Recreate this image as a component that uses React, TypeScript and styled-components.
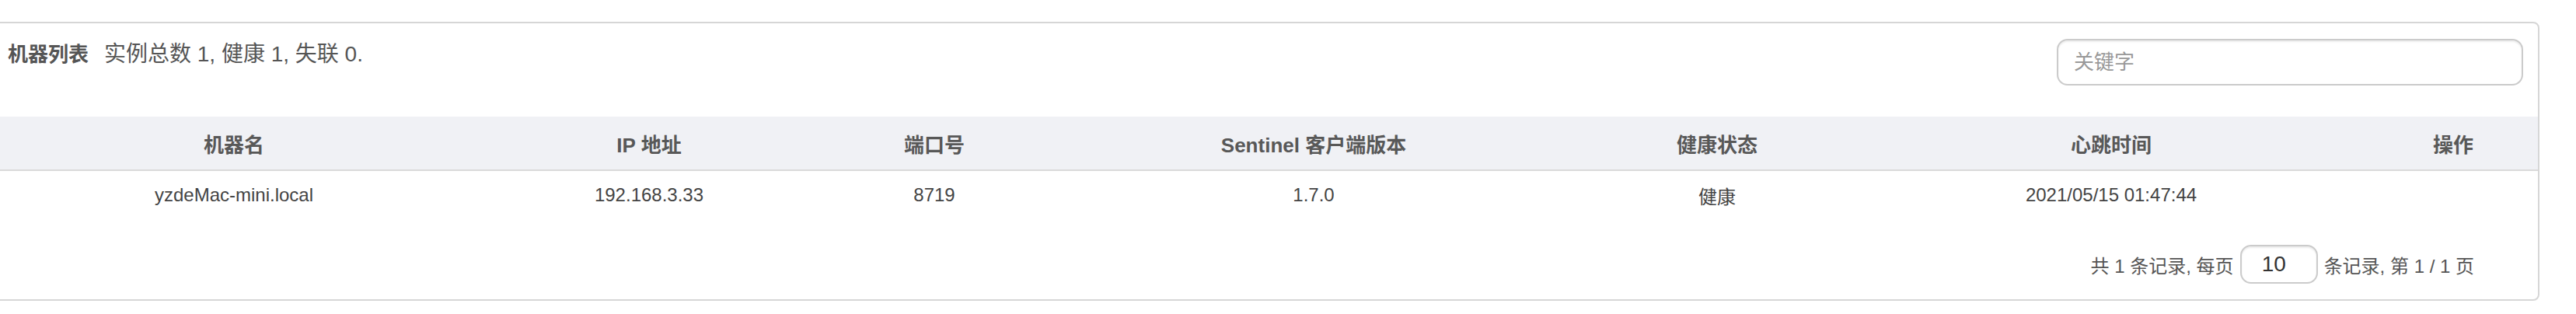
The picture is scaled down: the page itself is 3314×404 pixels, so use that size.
import React from 'react';
import styled, { createGlobalStyle } from 'styled-components';

const GlobalStyle = createGlobalStyle`
  html, body { margin: 0; padding: 0; background: #ffffff; }
  body {
    font-family: "Liberation Sans", "Noto Sans CJK SC", sans-serif;
    color: #444;
    overflow: hidden;
  }
  * { box-sizing: border-box; }
`;

const Page = styled.div`
  padding: 28px 47px 0 0;
`;

const Card = styled.section`
  margin-left: -13px;
  border: 2px solid #d6d6d6;
  border-radius: 8px;
  background: #fff;
`;

const CardHeader = styled.div`
  display: flex;
  justify-content: space-between;
  align-items: flex-start;
  padding: 20px 19px 40px 21px;
`;

const TitleLine = styled.div`
  display: flex;
  align-items: baseline;
  margin-top: 2px;
  line-height: 36px;
  color: #555;
`;

const TitleStrong = styled.span`
  font-size: 26px;
  font-weight: 700;
  margin-right: 20px;
`;

const Summary = styled.span`
  font-size: 28px;
  font-weight: 400;
`;

const SearchInput = styled.input`
  width: 600px;
  height: 60px;
  border: 2px solid #cbcbcb;
  border-radius: 14px;
  padding: 0 20px;
  font-family: inherit;
  font-size: 26px;
  color: #333;
  box-shadow: inset 0 2px 2px rgba(0, 0, 0, 0.075);
  outline: none;
  &::placeholder { color: #999; }
`;

const COLS = '624px 444px 290px 686px 352px 662px 1fr';

const HeadRow = styled.div`
  display: grid;
  grid-template-columns: ${COLS};
  height: 70px;
  align-items: center;
  background: #f0f1f5;
  border-bottom: 2px solid #dadada;
`;

const HeadCell = styled.div`
  text-align: center;
  font-size: 26px;
  font-weight: 700;
  color: #585858;
`;

const BodyRow = styled.div`
  display: grid;
  grid-template-columns: ${COLS};
  height: 56px;
  padding-top: 6px;
  align-items: center;
`;

const BodyCell = styled.div`
  text-align: center;
  font-size: 24px;
  color: #444;
`;

const Pager = styled.div`
  display: flex;
  justify-content: flex-end;
  align-items: center;
  gap: 8px;
  padding: 39px 82px 20px 0;
  font-size: 24px;
  color: #555;
`;

const PageSizeInput = styled.input`
  width: 100px;
  height: 50px;
  border: 2px solid #cbcbcb;
  border-radius: 14px;
  padding: 0 0 0 26px;
  font-family: inherit;
  font-size: 28px;
  color: #333;
  box-shadow: inset 0 2px 2px rgba(0, 0, 0, 0.075);
  outline: none;
`;

const headers = ['机器名', 'IP 地址', '端口号', 'Sentinel 客户端版本', '健康状态', '心跳时间', '操作'];

const rows = [
  ['yzdeMac-mini.local', '192.168.3.33', '8719', '1.7.0', '健康', '2021/05/15 01:47:44', ''],
];

export default function App() {
  return (
    <>
      <GlobalStyle />
      <Page>
        <Card>
          <CardHeader>
            <TitleLine>
              <TitleStrong>机器列表</TitleStrong>
              <Summary>实例总数 1, 健康 1, 失联 0.</Summary>
            </TitleLine>
            <SearchInput placeholder="关键字" />
          </CardHeader>
          <HeadRow>
            {headers.map((h) => (
              <HeadCell key={h}>{h}</HeadCell>
            ))}
          </HeadRow>
          {rows.map((r, i) => (
            <BodyRow key={i}>
              {r.map((c, j) => (
                <BodyCell key={j}>{c}</BodyCell>
              ))}
            </BodyRow>
          ))}
          <Pager>
            <span>共 1 条记录, 每页</span>
            <PageSizeInput defaultValue="10" />
            <span>条记录, 第 1 / 1 页</span>
          </Pager>
        </Card>
      </Page>
    </>
  );
}
